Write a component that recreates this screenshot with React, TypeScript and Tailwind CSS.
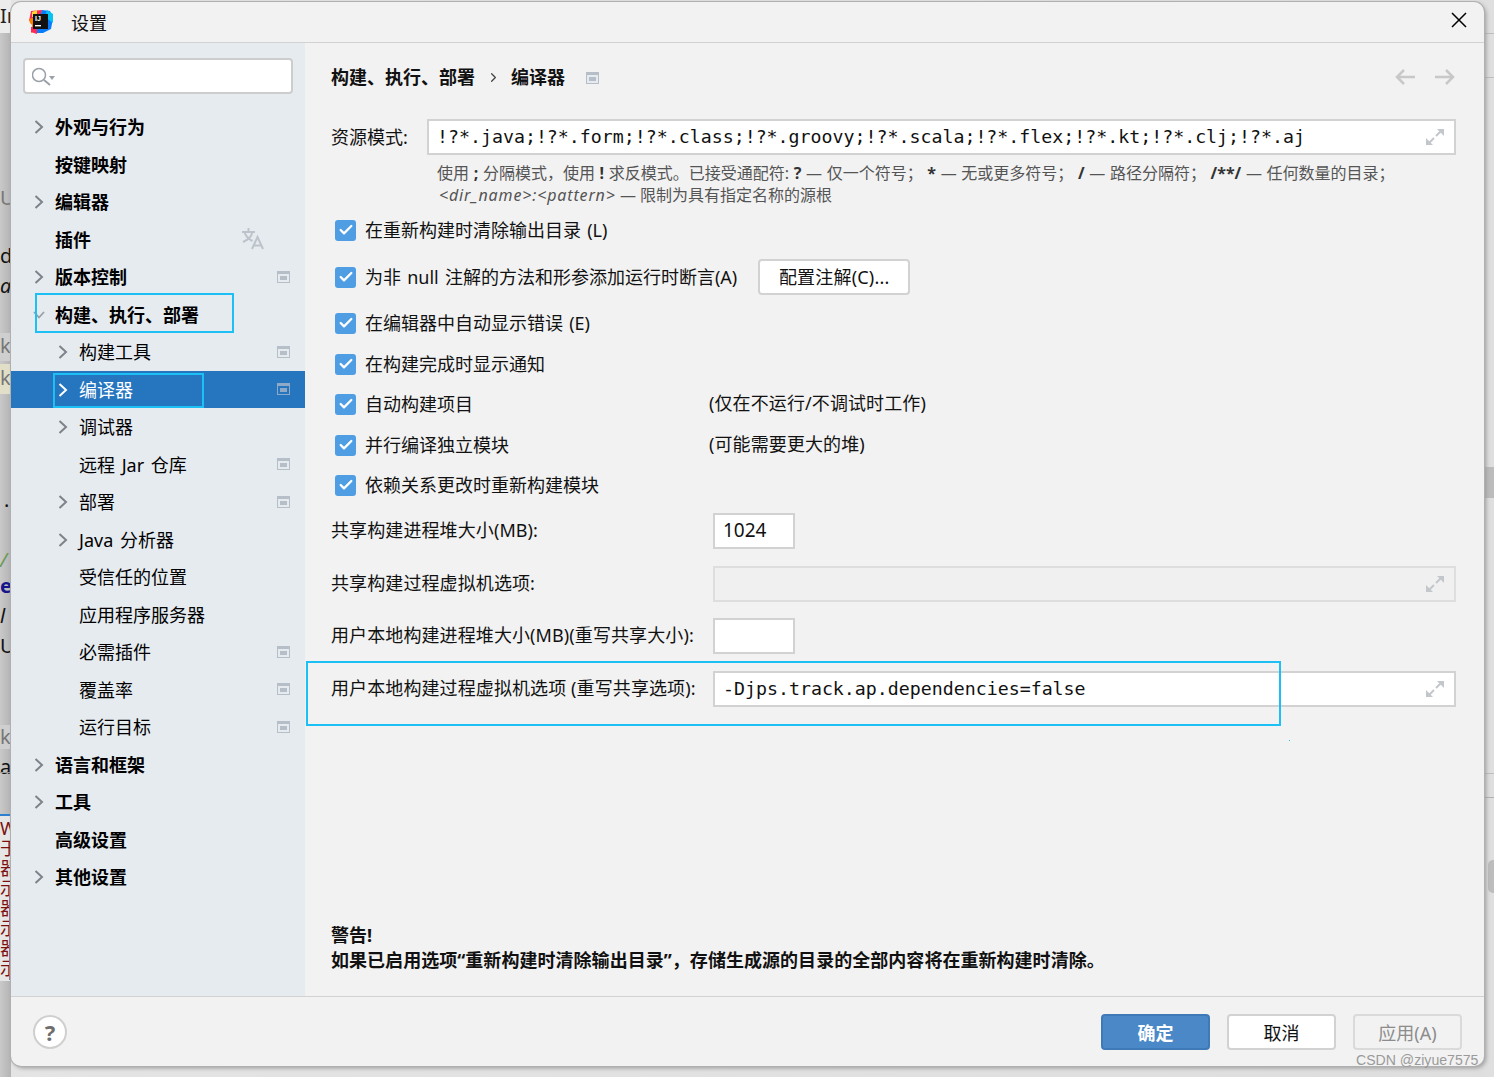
import React from "react";
import { ChevronRight, Check } from "lucide-react";

const FONT = "font-['Noto_Sans','Noto_Sans_CJK_SC',sans-serif]";
const MONO = "font-['DejaVu_Sans_Mono','Noto_Sans_CJK_SC',monospace]";

type Row = { t: string; lvl: 0 | 1; chev?: boolean; open?: boolean; sel?: boolean; proj?: boolean; lang?: boolean };
const rows: Row[] = [
  { t: "外观与行为", lvl: 0, chev: true },
  { t: "按键映射", lvl: 0 },
  { t: "编辑器", lvl: 0, chev: true },
  { t: "插件", lvl: 0, lang: true },
  { t: "版本控制", lvl: 0, chev: true, proj: true },
  { t: "构建、执行、部署", lvl: 0, chev: true, open: true },
  { t: "构建工具", lvl: 1, chev: true, proj: true },
  { t: "编译器", lvl: 1, chev: true, sel: true, proj: true },
  { t: "调试器", lvl: 1, chev: true },
  { t: "远程 Jar 仓库", lvl: 1, proj: true },
  { t: "部署", lvl: 1, chev: true, proj: true },
  { t: "Java 分析器", lvl: 1, chev: true },
  { t: "受信任的位置", lvl: 1 },
  { t: "应用程序服务器", lvl: 1 },
  { t: "必需插件", lvl: 1, proj: true },
  { t: "覆盖率", lvl: 1, proj: true },
  { t: "运行目标", lvl: 1, proj: true },
  { t: "语言和框架", lvl: 0, chev: true },
  { t: "工具", lvl: 0, chev: true },
  { t: "高级设置", lvl: 0 },
  { t: "其他设置", lvl: 0, chev: true },
];

function ProjIcon({ sel }: { sel?: boolean }) {
  return (
    <svg width="13" height="12" viewBox="0 0 13 12" className="shrink-0">
      <rect width="13" height="12" fill={sel ? "#8fa9c6" : "#b6bfc8"} />
      <rect x="1" y="3" width="11" height="8" fill={sel ? "#2675bf" : "#e6ebf0"} />
      <rect x="3" y="5" width="7" height="4" fill={sel ? "#8fa9c6" : "#b6bfc8"} />
    </svg>
  );
}

function Expand() {
  return (
    <svg width="20" height="20" viewBox="0 0 20 20" className="shrink-0" fill="none" stroke="#c3c7cb" strokeWidth="2">
      <path d="M11 9L17 3" />
      <path d="M12 2h7v7" fill="#c3c7cb" stroke="none" />
      <path d="M9 11L3 17" />
      <path d="M8 18H1v-7" fill="#c3c7cb" stroke="none" />
    </svg>
  );
}

function Logo() {
  return (
    <svg width="26" height="26" viewBox="0 0 26 26" className="shrink-0">
      <polygon points="3,2 14,1 12,14 1,12" fill="#fe2857" />
      <polygon points="1,10 8,8 8,22 3,24 4,16 2,14" fill="#ff8100" />
      <polygon points="4,3 9,1 9,8 4,8" fill="#fdd835" />
      <polygon points="14,1 22,2 25,9 23,20 15,24 6,24 10,14" fill="#087cfa" />
      <polygon points="19,1 25,5 25,14 17,8" fill="#07c3f2" />
      <polygon points="3,18 9,18 9,25 3,23" fill="#fe2857" />
      <rect x="5" y="5" width="15" height="15" fill="#111" />
      <text x="7" y="12" fontSize="7" fontWeight="700" fill="#fff" fontFamily="Liberation Sans">IJ</text>
      <rect x="7" y="16" width="6" height="1.4" fill="#fff" />
    </svg>
  );
}

function TranslateIcon() {
  return (
    <svg width="22" height="22" viewBox="0 0 22 22" fill="none" stroke="#bcc3ca" strokeWidth="2" className="shrink-0">
      <path d="M0 4h13M6.500 0v4M2.500 4c1 4 4 7 8 9M10.500 4c-1 4-4.500 8-9.500 10" />
      <path d="M10 21l5.500-12L21 21M12 17.500h7" />
    </svg>
  );
}

function Chevron({ r }: { r: Row }) {
  if (r.open) {
    return (
      <svg width="12" height="8" viewBox="0 0 12 8" fill="none" stroke="#9aa0a6" strokeWidth="1.8" className="shrink-0 -ml-[1px] mt-[1px]">
        <path d="M1 1l5 5.500L11 1" />
      </svg>
    );
  }
  return (
    <svg width="10" height="14" viewBox="0 0 10 14" fill="none" stroke={r.sel ? "#ffffff" : "#7f8389"} strokeWidth="2" className="shrink-0 mt-[1px]">
      <path d="M1.500 1L8 7l-6.500 6" />
    </svg>
  );
}

function SidebarRow({ r }: { r: Row }) {
  return (
    <div
      className={`h-[37.5px] flex items-center pr-[15px] ${r.lvl === 0 ? "pl-[23px]" : "pl-[47px]"} ${
        r.sel ? "bg-[#2675bf] text-white" : "text-black"
      }`}
    >
      <span className="w-[10px] flex justify-start shrink-0">{r.chev && <Chevron r={r} />}</span>
      <span className={`ml-[11px] mt-[1px] text-[18px] leading-none whitespace-pre [word-spacing:2px] ${r.lvl === 0 ? "font-bold" : ""}`}>{r.t}</span>
      <span className="ml-auto flex items-center">
        {r.proj && <ProjIcon sel={r.sel} />}
        {r.lang && <TranslateIcon />}
        {r.lang && <span className="w-[26px]" />}
      </span>
    </div>
  );
}

function CheckRow({ label, note, big, mt }: { label: string; note?: string; big?: React.ReactNode; mt: string }) {
  return (
    <div className={`flex items-center pl-[4px] text-[18px] text-[#111] [word-spacing:1.5px] ${big ? "h-[36px]" : "h-[30px]"} ${mt}`}>
      <div className={`flex items-center ${note ? "w-[374px]" : ""}`}>
        <span className="w-[21px] h-[21px] rounded-[3px] bg-[#4f9ee3] flex items-center justify-center shrink-0">
          <Check size={16} strokeWidth={3.4} className="text-white" />
        </span>
        <span className="ml-[9px] whitespace-pre">{label}</span>
      </div>
      {note && <span className="whitespace-pre -mt-[2px] tracking-[0.1px]">{note}</span>}
      {big}
    </div>
  );
}

function FieldRow({ label, mt, w, value, mono, disabled, expand }: { label: string; mt: string; w?: string; value?: string; mono?: boolean; disabled?: boolean; expand?: boolean }) {
  return (
    <div className={`flex items-center h-[36px] ${mt}`}>
      <span className="w-[382px] shrink-0 -mt-[2px] text-[18px] tracking-[0.1px] text-[#111] whitespace-pre">{label}</span>
      <div
        className={`h-[36px] border-2 flex items-center pl-[8px] pr-[9px] ${disabled ? "bg-[#f0f0f0] border-[#dedede]" : "bg-white border-[#d2d2d2]"} ${w ?? "flex-1"}`}
      >
        <span className={`flex-1 whitespace-pre text-[#111] ${mono ? `text-[18.25px] ${MONO}` : "text-[19px] -mt-[1px]"}`}>{value}</span>
        {expand && <Expand />}
      </div>
    </div>
  );
}

const Strong = ({ children }: { children: React.ReactNode }) => <b className="font-bold text-[#333]">{children}</b>;

export default function App() {
  return (
    <div className={`relative w-[1494px] h-[1077px] overflow-hidden bg-gradient-to-r from-[#e4e4e4] to-[#dedede] ${FONT}`}>
      {/* IDE behind the dialog */}
      <div className="absolute left-0 top-0 w-[11px] h-[1077px] overflow-hidden bg-gradient-to-r from-[#c9c9c9] to-[#b4b4b4] text-[20px] leading-none">
        <div className="absolute inset-x-0 top-0 h-[33px] bg-[#ececec]" />
        <span className="absolute left-0 top-[6px] text-[#222]">In</span>
        <span className="absolute left-0 top-[188px] text-[#777]">U</span>
        <span className="absolute left-0 top-[246px] text-[#111]">d</span>
        <span className="absolute left-0 top-[276px] italic text-[#111]">a</span>
        <div className="absolute inset-x-0 top-[333px] h-[28px] bg-[#cfcfcf]" />
        <span className="absolute left-0 top-[336px] text-[#777]">ke</span>
        <div className="absolute inset-x-0 top-[364px] h-[30px] bg-[#e2dfc8]" />
        <span className="absolute left-0 top-[368px] text-[#777]">ke</span>
        <span className="absolute left-[4px] top-[490px] text-[#111]">.</span>
        <span className="absolute left-0 top-[550px] italic text-[#6a9a55]">/</span>
        <span className="absolute left-0 top-[576px] font-bold text-[#14148c]">e</span>
        <span className="absolute left-0 top-[606px] italic text-[#111]">l</span>
        <span className="absolute left-0 top-[636px] text-[#111]">U</span>
        <div className="absolute inset-x-0 top-[725px] h-[24px] bg-[#cfcfcf]" />
        <span className="absolute left-0 top-[727px] text-[#777]">ke</span>
        <span className="absolute left-0 top-[757px] text-[#111]">a</span>
        <div className="absolute inset-x-0 top-[772px] h-px bg-[#9c9c9c]" />
        <div className="absolute inset-x-0 top-[814px] h-[2px] bg-[#2f7fd0]" />
        <div className="absolute inset-x-0 top-[816px] h-[165px] bg-[#e6e6e6]" />
        <div className="absolute left-0 top-[818px] text-[#7a1010] text-[18px] leading-[20px] whitespace-pre">W{"\n"}于{"\n"}器{"\n"}示{"\n"}器{"\n"}示{"\n"}器{"\n"}示</div>
        <div className="absolute right-[1px] top-[885px] w-px h-[95px] bg-[#a07090]" />
      </div>
      <div className="absolute right-0 top-0 w-[10px] h-[1077px] bg-[#dfdfdf]">
        <div className="absolute inset-x-0 top-[33px] h-px bg-[#bdbdbd]" />
        <div className="absolute inset-x-0 top-[77px] h-px bg-[#bdbdbd]" />
        <div className="absolute inset-x-0 top-[467px] h-[31px] bg-[#bcbcbc]" />
        <div className="absolute inset-x-0 top-[773px] h-px bg-[#bdbdbd]" />
        <div className="absolute inset-x-0 top-[797px] h-px bg-[#b0b0b0]" />
        <div className="absolute left-[4px] right-0 top-[860px] h-[33px] rounded-l-[5px] bg-[#bdbdbd]" />
      </div>

      {/* Dialog */}
      <div className="relative ml-[11px] mt-[2px] w-[1473px] h-[1064px] bg-[#f2f2f2] rounded-[10px] overflow-hidden flex flex-col shadow-[0_0_0_1px_#b0b0b0,2px_2px_4px_#999]">
        <header className="h-[41px] shrink-0 border-b-[1.5px] border-[#d2d2d2] flex items-center pl-[17px] pr-[17px]">
          <Logo />
          <span className="ml-[17px] text-[18px] text-[#111] mt-[2px]">设置</span>
          <svg width="16" height="16" viewBox="0 0 16 16" fill="none" stroke="#000" strokeWidth="1.5" className="ml-auto -mt-[4px] shrink-0">
            <path d="M1 1l14 14M15 1L1 15" />
          </svg>
        </header>

        <div className="flex-1 flex min-h-0">
          <aside className="w-[294px] shrink-0 bg-[#e6ebf0] pt-[15px]">
            <div className="ml-[12px] w-[270px] h-[36px] bg-white border-2 border-[#cdcdcd] rounded-[4px] flex items-center pl-[7px]">
              <svg width="26" height="22" viewBox="0 0 26 22" fill="none">
                <circle cx="7" cy="10" r="6.500" stroke="#9aa1a8" strokeWidth="1.5" />
                <path d="M12 15l6 5" stroke="#9aa1a8" strokeWidth="2" />
                <path d="M17 11h6l-3 4z" fill="#9aa1a8" />
              </svg>
            </div>
            <div className="mt-[14px]">
              {rows.map((r) => (
                <SidebarRow key={r.t} r={r} />
              ))}
            </div>
          </aside>

          <main className="flex-1 min-w-0 pl-[26px] pr-[28px] pt-[16px] pb-[23px] flex flex-col">
            <div className="h-[36px] flex items-center text-[18px] font-bold text-[#111]">
              <span>构建、执行、部署</span>
              <ChevronRight size={15} strokeWidth={2} className="ml-[11px] text-[#444]" />
              <span className="ml-[10px]">编译器</span>
              <span className="ml-[21px] mt-[2px]">
                <ProjIcon />
              </span>
              <svg width="20" height="16" viewBox="0 0 20 16" fill="none" stroke="#c8c8c8" strokeWidth="2.5" className="ml-auto shrink-0">
                <path d="M20 8H2M9 1L2 8l7 7" />
              </svg>
              <svg width="20" height="16" viewBox="0 0 20 16" fill="none" stroke="#c8c8c8" strokeWidth="2.5" className="ml-[20px] mr-[1px] shrink-0">
                <path d="M0 8h18M11 1l7 7-7 7" />
              </svg>
            </div>

            <div className="mt-[24px] h-[36px] flex items-center">
              <span className="w-[96px] shrink-0 text-[18px] text-[#111]">资源模式:</span>
              <div className="flex-1 h-[36px] bg-white border-2 border-[#d2d2d2] flex items-center pl-[8px] pr-[9px]">
                <span className={`flex-1 whitespace-pre text-[18.25px] text-[#111] ${MONO}`}>!?*.java;!?*.form;!?*.class;!?*.groovy;!?*.scala;!?*.flex;!?*.kt;!?*.clj;!?*.aj</span>
                <Expand />
              </div>
            </div>

            <div className="mt-[7px] pl-[106px] text-[16px] leading-[22px] text-[#555] whitespace-pre">
              <div className="[word-spacing:0.5px]">
                使用 <Strong>;</Strong> 分隔模式，使用 <Strong>!</Strong> 求反模式。已接受通配符: <Strong>?</Strong> — 仅一个符号； <Strong>*</Strong> — 无或更多符号； <Strong>/</Strong> — 路径分隔符； <Strong>/**/</Strong> — 任何数量的目录；
              </div>
              <div>
                <i className="ml-[2px] tracking-[0.85px]">&lt;dir_name&gt;:&lt;pattern&gt;</i> — 限制为具有指定名称的源根
              </div>
            </div>

            <CheckRow mt="mt-[9px]" label="在重新构建时清除输出目录 (L)" />
            <CheckRow
              mt="mt-[14px]"
              label="为非 null 注解的方法和形参添加运行时断言(A)"
              big={
                <button className="ml-[21px] w-[152px] h-[36px] bg-white border-2 border-[#d2d2d2] rounded-[4px] text-[18px] text-[#111] tracking-[0.2px]">
                  配置注解(C)...
                </button>
              }
            />
            <CheckRow mt="mt-[13px]" label="在编辑器中自动显示错误 (E)" />
            <CheckRow mt="mt-[11px]" label="在构建完成时显示通知" />
            <CheckRow mt="mt-[10px]" label="自动构建项目" note="(仅在不运行/不调试时工作)" />
            <CheckRow mt="mt-[11px]" label="并行编译独立模块" note="(可能需要更大的堆)" />
            <CheckRow mt="mt-[10px]" label="依赖关系更改时重新构建模块" />

            <FieldRow mt="mt-[13px]" label="共享构建进程堆大小(MB):" w="w-[82px]" value="1024" />
            <FieldRow mt="mt-[17px]" label="共享构建过程虚拟机选项:" disabled expand />
            <FieldRow mt="mt-[16px]" label="用户本地构建进程堆大小(MB)(重写共享大小):" w="w-[82px]" />
            <FieldRow mt="mt-[17px]" label="用户本地构建过程虚拟机选项 (重写共享选项):" value="-Djps.track.ap.dependencies=false" mono expand />

            <div className="mt-auto text-[18px] leading-[25px] font-bold text-[#111] tracking-[0.04px]">
              <div>警告!</div>
              <div>如果已启用选项“重新构建时清除输出目录”，存储生成源的目录的全部内容将在重新构建时清除。</div>
            </div>
          </main>
        </div>

        <footer className="h-[70px] shrink-0 border-t-[1.5px] border-[#d2d2d2] flex items-center pl-[22px] pr-[22px]">
          <span className="w-[34px] h-[34px] rounded-full bg-white border-2 border-[#cfcfcf] flex items-center justify-center text-[22px] font-bold text-[#6e6e6e] leading-none">?</span>
          <button className="ml-auto w-[109px] h-[36px] pt-[3px] rounded-[4px] bg-[#4a88c7] border-2 border-[#3f7ab8] text-[18px] font-bold text-white">确定</button>
          <button className="ml-[17px] w-[109px] h-[36px] pt-[3px] rounded-[4px] bg-white border-2 border-[#d2d2d2] text-[18px] text-[#111]">取消</button>
          <button className="ml-[17px] w-[109px] h-[36px] pt-[3px] rounded-[4px] bg-[#f2f2f2] border-2 border-[#dadada] text-[18px] text-[#8c8c8c]">应用(A)</button>
        </footer>
      </div>

      {/* Annotations drawn on top of the screenshot */}
      <div className="absolute left-[35px] top-[293px] w-[199px] h-[40px] border-2 border-[#1cc0f5]" />
      <div className="absolute left-[53px] top-[373px] w-[151px] h-[35px] border-2 border-[#1cc0f5]" />
      <div className="absolute left-[306px] top-[661px] w-[975px] h-[65px] border-2 border-[#1cc0f5]" />
      <div className="absolute left-[1289px] top-[740px] w-px h-px bg-[#1cc0f5]" />
      <span className="absolute left-[1356px] top-[1051px] whitespace-nowrap text-[14.1px] leading-[18px] text-[#9a9a9a] font-['Liberation_Sans',sans-serif]">CSDN @ziyue7575</span>
    </div>
  );
}
